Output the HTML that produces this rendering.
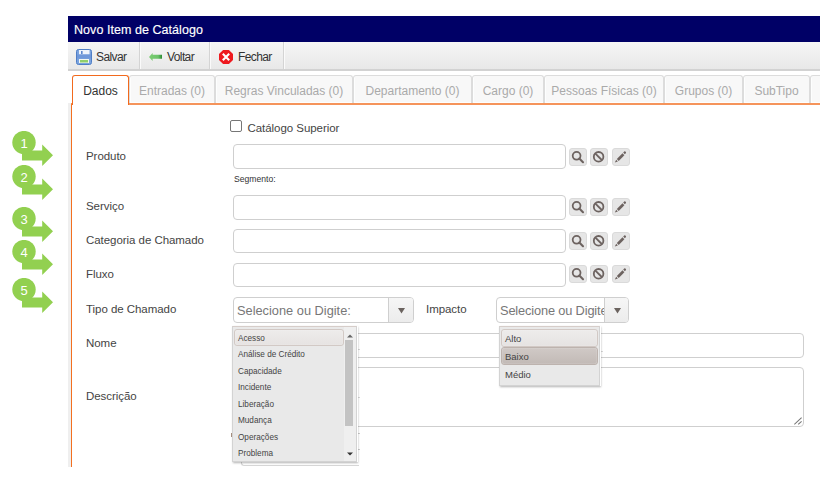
<!DOCTYPE html>
<html><head><meta charset="utf-8">
<style>
*{box-sizing:border-box;margin:0;padding:0}
html,body{width:835px;height:493px;overflow:hidden;background:#fff;font-family:"Liberation Sans",sans-serif;}
.a{position:absolute;white-space:nowrap}
#clip{position:absolute;left:0;top:0;width:820px;height:467px;overflow:hidden}
#title{left:68px;top:16px;width:752px;height:26px;background:#000066;color:#fff;font-size:12.5px;-webkit-text-stroke:0.15px #fff}
#tb{left:68px;top:42px;width:752px;height:29px;background:linear-gradient(#f6f6f6,#e8e8e8);border-bottom:2px solid #d2d2d2}
.sep{position:absolute;top:0;width:1px;height:27px;background:#d4d4d4;box-shadow:1px 0 0 #fafafa}
.tbt{font-size:12px;color:#333;letter-spacing:-0.6px}
.tab{position:absolute;top:75px;height:28px;background:#f8f8f8;border:1px solid #dcdcdc;border-bottom:none;border-radius:3px 3px 0 0;color:#aaa;font-size:12px;text-align:center;line-height:31px;box-shadow:inset 1px -1px 0 #fdfefe}
.lbl{font-size:11.5px;color:#444;letter-spacing:-0.05px}
.sel{overflow:hidden}
.lst{background:#e9e9e9;border:1px solid #d3d3d3;border-top-color:#d6cdc9;box-shadow:1px 0 0 #fff,1px 1px 2px rgba(0,0,0,0.3);overflow:hidden}
.hl{position:absolute;border:1px solid #d2c9c5;border-radius:3px;background:linear-gradient(#eeeceb,#e6e3e2);box-shadow:inset 0 0 1px #fff}
.li{position:absolute;left:5px;font-size:8.2px;color:#444;white-space:nowrap}
.ph{position:absolute;left:3px;top:4.5px;font-size:12.8px;color:#777;white-space:nowrap;letter-spacing:0px}
.arr{position:absolute;right:0;top:0;width:25px;height:100%;background:linear-gradient(#f6f6f6,#ececec);border-left:1px solid #cfcfcf}
.inp{position:absolute;border:1px solid #cfcfcf;border-radius:4px;background:#fff}
.btn{position:absolute;width:18px;height:18px;background:#e6e6e6;border:1px solid #dadada;border-radius:3px}
</style></head><body>
<div id="clip">
<div class="a" id="title"><span class="a" style="left:6px;top:7px;letter-spacing:0.05px">Novo Item de Catálogo</span></div>
<div class="a" id="tb">
  <div class="sep" style="left:71px"></div>
  <div class="sep" style="left:141px"></div>
  <div class="sep" style="left:215px"></div>
  <svg class="a" style="left:8px;top:7px" width="16" height="16" viewBox="0 0 16 16">
    <rect x="0.5" y="0.5" width="15" height="15" rx="2" fill="#7aa3df" stroke="#4f7ec6"/>
    <rect x="3" y="1" width="10.5" height="4.5" fill="#eef3fb"/>
    <rect x="5" y="2" width="1.6" height="3" fill="#5b87cd"/>
    <rect x="1" y="5.5" width="14" height="4" fill="#6f98da"/>
    <rect x="3" y="10" width="10" height="4" fill="#f4f8f0"/>
    <rect x="4" y="11" width="8" height="2.5" fill="#90cf6c"/>
  </svg>
  <span class="a tbt" style="left:28px;top:8px">Salvar</span>
  <svg class="a" style="left:81px;top:11px" width="14" height="9" viewBox="0 0 14 9"><defs><linearGradient id="ag" x1="0" x2="1"><stop offset="0" stop-color="#7ccd72"/><stop offset="0.7" stop-color="#6cc36a"/><stop offset="1" stop-color="#2d8a34"/></linearGradient></defs>
    <path d="M0 4 L3.6 0 L3.6 1.8 L13 1.8 L13 5.8 L3.6 5.8 L3.6 8 Z" fill="url(#ag)"/>
  </svg>
  <span class="a tbt" style="left:99px;top:8px">Voltar</span>
  <svg class="a" style="left:151px;top:8px" width="14" height="14" viewBox="0 0 14 14">
    <path d="M4.1 0 L9.9 0 L14 4.1 L14 9.9 L9.9 14 L4.1 14 L0 9.9 L0 4.1 Z" fill="#ee1a1f"/>
    <path d="M3.8 3.8 L10.2 10.2 M10.2 3.8 L3.8 10.2" stroke="#fff" stroke-width="2.1" stroke-linecap="butt"/>
  </svg>
  <span class="a tbt" style="left:170px;top:8px">Fechar</span>
</div>
<!-- left gray strip -->
<div class="a" style="left:68px;top:103px;width:3px;height:400px;background:#efefef"></div>
<!-- panel border -->
<div class="a" style="left:71px;top:103px;width:760px;height:400px;border-left:1px solid #f37021;border-top:2px solid #f5945b"></div>
<!-- tabs -->
<div class="tab" style="left:72px;width:57px;background:#fff;border-color:#f26a1e;color:#333;height:30px;box-shadow:none;z-index:2">Dados</div>
<div class="tab" style="left:129px;width:86px">Entradas (0)</div>
<div class="tab" style="left:215px;width:138px">Regras Vinculadas (0)</div>
<div class="tab" style="left:353px;width:119px">Departamento (0)</div>
<div class="tab" style="left:472px;width:72px">Cargo (0)</div>
<div class="tab" style="left:544px;width:120px">Pessoas Físicas (0)</div>
<div class="tab" style="left:664px;width:79px">Grupos (0)</div>
<div class="tab" style="left:743px;width:67px">SubTipo</div>
<div class="tab" style="left:810px;width:60px"></div>

<!-- form -->
<div class="a" style="left:230px;top:120px;width:12px;height:12px;border:1px solid #767676;border-radius:2px;background:#fff"></div>
<span class="a lbl" style="left:247.5px;top:121.5px">Catálogo Superior</span>

<span class="a lbl" style="left:86px;top:150px">Produto</span>
<div class="inp" style="left:233px;top:144px;width:333px;height:25px"></div>
<div class="btn" style="left:569px;top:148px"><svg width="16" height="16" viewBox="0 0 16 16"><circle cx="6.6" cy="6.8" r="3.9" fill="none" stroke="#6d6360" stroke-width="1.8"/><path d="M9.3 9.6 L13 13.2" stroke="#6d6360" stroke-width="2.1" stroke-linecap="round"/></svg></div>
<div class="btn" style="left:590px;top:148px"><svg width="16" height="16" viewBox="0 0 16 16"><circle cx="7.6" cy="7.8" r="4.8" fill="none" stroke="#6d6360" stroke-width="1.8"/><path d="M4.4 4.6 L10.8 11" stroke="#6d6360" stroke-width="1.8"/></svg></div>
<div class="btn" style="left:612px;top:148px"><svg width="16" height="16" viewBox="0.8 0 16 16"><path d="M4.6 10.0 L10.3 4.3 L12.2 6.2 L6.5 11.9 Z" fill="#6d6360"/><path d="M4.0 10.8 L5.7 12.5 L2.6 13.6 Z" fill="#6d6360"/><path d="M11.0 3.6 L12.0 2.6 Q12.6 2.0 13.2 2.6 L13.6 3.0 Q14.2 3.6 13.6 4.2 L12.6 5.2 Z" fill="#6d6360"/></svg></div>
<span class="a" style="left:234px;top:174px;font-size:8.6px;color:#333">Segmento:</span>

<span class="a lbl" style="left:86px;top:200px">Serviço</span>
<div class="inp" style="left:233px;top:195px;width:333px;height:25px"></div>
<div class="btn" style="left:569px;top:198px"><svg width="16" height="16" viewBox="0 0 16 16"><circle cx="6.6" cy="6.8" r="3.9" fill="none" stroke="#6d6360" stroke-width="1.8"/><path d="M9.3 9.6 L13 13.2" stroke="#6d6360" stroke-width="2.1" stroke-linecap="round"/></svg></div>
<div class="btn" style="left:590px;top:198px"><svg width="16" height="16" viewBox="0 0 16 16"><circle cx="7.6" cy="7.8" r="4.8" fill="none" stroke="#6d6360" stroke-width="1.8"/><path d="M4.4 4.6 L10.8 11" stroke="#6d6360" stroke-width="1.8"/></svg></div>
<div class="btn" style="left:612px;top:198px"><svg width="16" height="16" viewBox="0.8 0 16 16"><path d="M4.6 10.0 L10.3 4.3 L12.2 6.2 L6.5 11.9 Z" fill="#6d6360"/><path d="M4.0 10.8 L5.7 12.5 L2.6 13.6 Z" fill="#6d6360"/><path d="M11.0 3.6 L12.0 2.6 Q12.6 2.0 13.2 2.6 L13.6 3.0 Q14.2 3.6 13.6 4.2 L12.6 5.2 Z" fill="#6d6360"/></svg></div>

<span class="a lbl" style="left:86px;top:234px">Categoria de Chamado</span>
<div class="inp" style="left:233px;top:229px;width:333px;height:24px"></div>
<div class="btn" style="left:569px;top:232px"><svg width="16" height="16" viewBox="0 0 16 16"><circle cx="6.6" cy="6.8" r="3.9" fill="none" stroke="#6d6360" stroke-width="1.8"/><path d="M9.3 9.6 L13 13.2" stroke="#6d6360" stroke-width="2.1" stroke-linecap="round"/></svg></div>
<div class="btn" style="left:590px;top:232px"><svg width="16" height="16" viewBox="0 0 16 16"><circle cx="7.6" cy="7.8" r="4.8" fill="none" stroke="#6d6360" stroke-width="1.8"/><path d="M4.4 4.6 L10.8 11" stroke="#6d6360" stroke-width="1.8"/></svg></div>
<div class="btn" style="left:612px;top:232px"><svg width="16" height="16" viewBox="0.8 0 16 16"><path d="M4.6 10.0 L10.3 4.3 L12.2 6.2 L6.5 11.9 Z" fill="#6d6360"/><path d="M4.0 10.8 L5.7 12.5 L2.6 13.6 Z" fill="#6d6360"/><path d="M11.0 3.6 L12.0 2.6 Q12.6 2.0 13.2 2.6 L13.6 3.0 Q14.2 3.6 13.6 4.2 L12.6 5.2 Z" fill="#6d6360"/></svg></div>

<span class="a lbl" style="left:86px;top:268px">Fluxo</span>
<div class="inp" style="left:233px;top:263px;width:333px;height:24px"></div>
<div class="btn" style="left:569px;top:265px"><svg width="16" height="16" viewBox="0 0 16 16"><circle cx="6.6" cy="6.8" r="3.9" fill="none" stroke="#6d6360" stroke-width="1.8"/><path d="M9.3 9.6 L13 13.2" stroke="#6d6360" stroke-width="2.1" stroke-linecap="round"/></svg></div>
<div class="btn" style="left:590px;top:265px"><svg width="16" height="16" viewBox="0 0 16 16"><circle cx="7.6" cy="7.8" r="4.8" fill="none" stroke="#6d6360" stroke-width="1.8"/><path d="M4.4 4.6 L10.8 11" stroke="#6d6360" stroke-width="1.8"/></svg></div>
<div class="btn" style="left:612px;top:265px"><svg width="16" height="16" viewBox="0.8 0 16 16"><path d="M4.6 10.0 L10.3 4.3 L12.2 6.2 L6.5 11.9 Z" fill="#6d6360"/><path d="M4.0 10.8 L5.7 12.5 L2.6 13.6 Z" fill="#6d6360"/><path d="M11.0 3.6 L12.0 2.6 Q12.6 2.0 13.2 2.6 L13.6 3.0 Q14.2 3.6 13.6 4.2 L12.6 5.2 Z" fill="#6d6360"/></svg></div>

<span class="a lbl" style="left:86px;top:303px">Tipo de Chamado</span>
<div class="inp sel" style="left:233px;top:297px;width:181px;height:26px"><span class="ph">Selecione ou Digite:</span><div class="arr"><svg width="7" height="6" viewBox="0 0 7 6" style="position:absolute;left:9px;top:10px"><path d="M0 0 H7 L3.5 5.5 Z" fill="#6b635f"/></svg></div></div>
<span class="a lbl" style="left:426px;top:303px">Impacto</span>
<div class="inp sel" style="left:496px;top:297px;width:133px;height:26px"><span class="ph" style="letter-spacing:-0.15px">Selecione ou Digite:</span><div class="arr" style="width:24px"><svg width="7" height="6" viewBox="0 0 7 6" style="position:absolute;left:9px;top:10px"><path d="M0 0 H7 L3.5 5.5 Z" fill="#6b635f"/></svg></div></div>

<span class="a lbl" style="left:86px;top:337px">Nome</span>
<div class="inp" style="left:233px;top:333px;width:571px;height:25px"></div>
<span class="a lbl" style="left:86px;top:390px">Descrição</span>
<div class="inp" style="left:233px;top:367px;width:571px;height:60px"><svg width="8" height="8" viewBox="0 0 8 8" style="position:absolute;right:1px;bottom:1px"><path d="M7.6 0.7 L0.3 7.4 M7.6 4.3 L4.2 7.4" stroke="#777" stroke-width="1.1"/></svg></div>

<div class="a" style="left:241px;top:436px;width:118px;height:30px;border-left:1px solid #d6d6d6;border-bottom:1px solid #d6d6d6;border-bottom-left-radius:3px"></div>
<div class="a" style="left:357px;top:433px;width:3px;height:1px;background:#ccc"></div>
<div class="a" style="left:600px;top:351px;width:3px;height:1px;background:#d8d8d8"></div>
<div class="a" style="left:357px;top:349px;width:3px;height:1px;background:#d8d8d8"></div>
<div class="a" style="left:357px;top:397px;width:3px;height:1px;background:#d8d8d8"></div>
<div class="a" style="left:357px;top:449px;width:3px;height:1px;background:#ccc"></div>
<div class="a" style="left:231px;top:433px;width:1px;height:4px;background:#a89080"></div>
<!-- tipo list -->
<div class="a lst" style="left:232px;top:326px;width:125px;height:136px">
  <div class="hl" style="left:1px;top:2px;width:110px;height:17px"></div>
  <span class="li" style="top:7px">Acesso</span>
  <span class="li" style="top:23.3px">Análise de Crédito</span>
  <span class="li" style="top:39.6px">Capacidade</span>
  <span class="li" style="top:56px">Incidente</span>
  <span class="li" style="top:72.5px">Liberação</span>
  <span class="li" style="top:89px">Mudança</span>
  <span class="li" style="top:105.5px">Operações</span>
  <span class="li" style="top:122px">Problema</span>
  <div class="a" style="left:111px;top:0;width:12px;height:134px;background:#efefef"></div>
  <svg class="a" style="left:113.5px;top:7px" width="6" height="4" viewBox="0 0 6 4"><path d="M0 3.5 L3 0.5 L6 3.5 Z" fill="#666"/></svg>
  <div class="a" style="left:112px;top:13px;width:8px;height:86px;background:#c3c3c3"></div>
  <svg class="a" style="left:113.5px;top:125px" width="6" height="4" viewBox="0 0 6 4"><path d="M0 0.5 L6 0.5 L3 3.5 Z" fill="#333"/></svg>
</div>
<!-- impacto list -->
<div class="a lst" style="left:499px;top:326px;width:101px;height:60px">
  <div class="hl" style="left:1px;top:2px;width:97px;height:18px"></div>
  <div class="hl" style="left:1px;top:20px;width:97px;height:18px;background:linear-gradient(#d0c9c6,#c2bab6);border-color:#bdb3ae"></div>
  <span class="li" style="top:6px;font-size:9.5px">Alto</span>
  <span class="li" style="top:24px;font-size:9.5px">Baixo</span>
  <span class="li" style="top:42px;font-size:9.5px">Médio</span>
</div>
</div>
<!-- step icons -->
<svg class="a" style="left:0;top:131px" width="56" height="38" viewBox="0 0 56 38"><circle cx="24" cy="11.6" r="11.7" fill="#92d050"/><path d="M22 19.5 H42.2 V13.5 L53 24.2 L42.2 35 V29.5 H22 Z" fill="#92d050"/><text x="24" y="16.6" text-anchor="middle" font-family="Liberation Sans" font-size="13" fill="#fff">1</text></svg>
<svg class="a" style="left:0;top:165px" width="56" height="38" viewBox="0 0 56 38"><circle cx="24" cy="11.6" r="11.7" fill="#92d050"/><path d="M22 19.5 H42.2 V13.5 L53 24.2 L42.2 35 V29.5 H22 Z" fill="#92d050"/><text x="24" y="16.6" text-anchor="middle" font-family="Liberation Sans" font-size="13" fill="#fff">2</text></svg>
<svg class="a" style="left:0;top:206.8px" width="56" height="38" viewBox="0 0 56 38"><circle cx="24" cy="11.6" r="11.7" fill="#92d050"/><path d="M22 19.5 H42.2 V13.5 L53 24.2 L42.2 35 V29.5 H22 Z" fill="#92d050"/><text x="24" y="16.6" text-anchor="middle" font-family="Liberation Sans" font-size="13" fill="#fff">3</text></svg>
<svg class="a" style="left:0;top:240.3px" width="56" height="38" viewBox="0 0 56 38"><circle cx="24" cy="11.6" r="11.7" fill="#92d050"/><path d="M22 19.5 H42.2 V13.5 L53 24.2 L42.2 35 V29.5 H22 Z" fill="#92d050"/><text x="24" y="16.6" text-anchor="middle" font-family="Liberation Sans" font-size="13" fill="#fff">4</text></svg>
<svg class="a" style="left:0;top:278.2px" width="56" height="38" viewBox="0 0 56 38"><circle cx="24" cy="11.6" r="11.7" fill="#92d050"/><path d="M22 19.5 H42.2 V13.5 L53 24.2 L42.2 35 V29.5 H22 Z" fill="#92d050"/><text x="24" y="16.6" text-anchor="middle" font-family="Liberation Sans" font-size="13" fill="#fff">5</text></svg>
</body></html>
